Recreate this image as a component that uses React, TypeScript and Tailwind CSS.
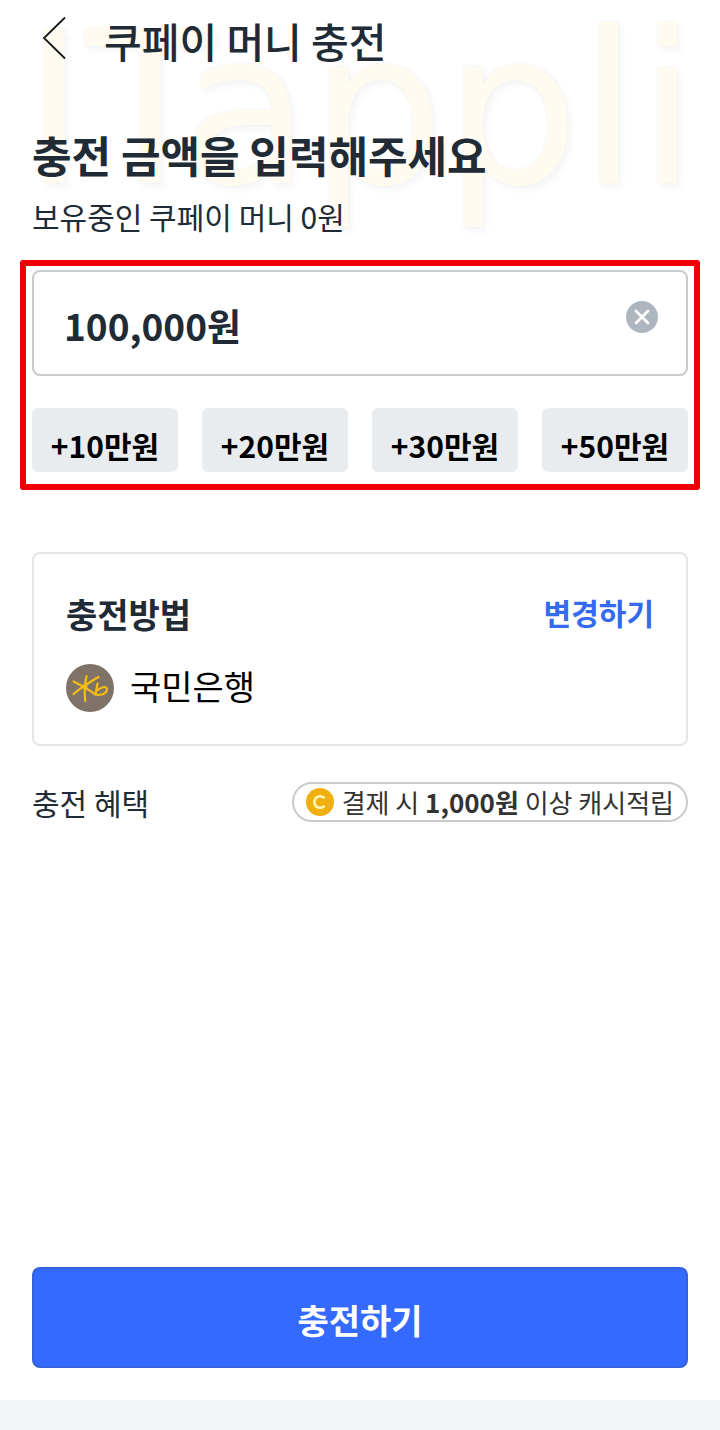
import { useState } from 'react'

interface QuickAmount { label: string; value: number }

const QUICK_AMOUNTS: QuickAmount[] = [
  { label: '+10만원', value: 100000 },
  { label: '+20만원', value: 200000 },
  { label: '+30만원', value: 300000 },
  { label: '+50만원', value: 500000 },
]

function formatWon(n: number): string {
  return n > 0 ? `${n.toLocaleString('en-US')}원` : ''
}

function BackIcon() {
  return (
    <svg width="24" height="44" viewBox="0 0 24 44" fill="none" stroke="#15191d" strokeWidth="1.8" aria-hidden="true">
      <path d="M23 1.5 2 22l21 20.5" />
    </svg>
  )
}

function ClearIcon() {
  return (
    <svg width="32" height="32" viewBox="0 0 32 32" fill="none" aria-hidden="true">
      <circle cx="16" cy="16" r="16" fill="#adb5bf" />
      <path d="M10 10 22 22M22 10 10 22" stroke="#fff" strokeWidth="2.8" strokeLinecap="round" />
    </svg>
  )
}

function KbLogo() {
  return (
    <svg width="48" height="48" viewBox="0 0 48 48" fill="none" aria-hidden="true">
      <circle cx="24" cy="24" r="24" fill="#7f7368" />
      <g stroke="#f5bd13" strokeWidth="2.2" strokeLinecap="round" strokeLinejoin="round">
        <path d="M20.5 12C18.600 20 18.200 28 19.200 37" />
        <path d="M32.500 13C25.500 17 16 23 7.500 30" />
        <path d="M7.500 17.500c7 3.500 14.500 7.500 22 13" />
        <path d="M31.500 19.500c-.6 3.500-1.300 7-2 11 4 1 9.500 0 11.200-3.500 1.200-3-1-4.500-3.800-3.800-2.600.7-4.600 2-6.400 3.700" />
      </g>
      <circle cx="19" cy="22.500" r="2.500" fill="#f5bd13" />
    </svg>
  )
}

function CashIcon() {
  return (
    <svg width="28" height="28" viewBox="0 0 28 28" fill="none" aria-hidden="true">
      <circle cx="14" cy="14" r="14" fill="#f0b010" />
      <path d="M18.500 10.200a5.800 5.800 0 1 0 0 7.600" stroke="#fff7b8" strokeWidth="2.600" />
    </svg>
  )
}

export default function App() {
  const [amount, setAmount] = useState(100000)

  return (
    <div className="relative isolate flex min-h-screen flex-col overflow-hidden bg-white font-['Noto_Sans_CJK_KR',sans-serif] text-[#212b36]">
      {/* Watermark */}
      <div
        aria-hidden="true"
        className="pointer-events-none absolute inset-x-0 top-0 -z-10 text-center font-['DejaVu_Sans',sans-serif] text-[212px] leading-[220px] whitespace-nowrap text-[#fffbf0] select-none [text-shadow:0_0_3px_#f1eeee,4px_5px_6px_#f7f7f9]"
      >
        ITappli
      </div>

      <header className="flex h-20 items-center gap-[38px] pr-8 pl-[42px]">
        <button type="button" aria-label="뒤로" className="-mt-1">
          <BackIcon />
        </button>
        <h1 className="text-[41px] leading-[60px] font-medium">쿠페이 머니 충전</h1>
      </header>

      <main className="flex flex-1 flex-col">
        <div className="px-8 pt-[42px]">
          <h2 className="text-[43px] leading-[64px] font-bold">충전 금액을 입력해주세요</h2>
          <p className="mt-2 text-[30px] leading-[44px]">보유중인 쿠페이 머니 0원</p>
        </div>

        {/* Amount */}
        <section className="mx-5 mt-[22px] rounded-[3px] border-[6px] border-[#ee0006] px-[6px] pt-1 pb-3">
          <div className="flex h-[106px] items-center rounded-lg border-2 border-[#c9cccf] bg-white pr-7 pl-[30px]">
            <input
              type="text"
              inputMode="numeric"
              aria-label="충전 금액"
              value={formatWon(amount)}
              onChange={e => setAmount(Number(e.target.value.replace(/\D/g, '')))}
              className="min-w-0 flex-1 bg-transparent pt-1 text-[37px] leading-[56px] font-bold outline-none"
            />
            <button type="button" aria-label="지우기" onClick={() => setAmount(0)} className="mb-3">
              <ClearIcon />
            </button>
          </div>
          <div className="mt-8 grid grid-cols-4 gap-6">
            {QUICK_AMOUNTS.map(q => (
              <button
                key={q.value}
                type="button"
                onClick={() => setAmount(amount + q.value)}
                className="h-16 rounded-md bg-[#e9ecef] pt-[10px] text-[30px] leading-[44px] font-bold text-black"
              >
                {q.label}
              </button>
            ))}
          </div>
        </section>

        {/* Payment method */}
        <section className="mx-8 mt-[62px] rounded-lg border-2 border-[#e3e5e7] px-8 pt-8 pb-[30px]">
          <div className="flex items-center justify-between">
            <h3 className="text-[34px] leading-[56px] font-bold">충전방법</h3>
            <button type="button" className="pb-1 text-[30px] leading-[44px] font-bold text-[#346aed]">
              변경하기
            </button>
          </div>
          <div className="mt-4 flex items-center gap-4 text-black">
            <span className="pt-1">
              <KbLogo />
            </span>
            <span className="text-[34px] leading-[56px]">국민은행</span>
          </div>
        </section>

        <div className="flex items-center justify-between px-8 pt-[34px]">
          <span className="text-[30px] leading-[44px]">충전 혜택</span>
          <span className="flex h-10 items-center gap-2 rounded-full border-2 border-[#c9cccf] bg-white px-3 text-[26px] leading-[36px] text-[#333333]">
            <CashIcon />
            <span>결제 시 <b>1,000원</b> 이상 캐시적립</span>
          </span>
        </div>

        <div className="mt-auto px-8 pb-8">
          <button
            type="button"
            className="h-[101px] w-full rounded-lg border-2 border-[#3562dc] bg-[#346aff] pt-1 text-[34px] leading-[56px] font-bold text-white"
          >
            충전하기
          </button>
        </div>
      </main>

      <footer className="h-[30px] bg-[#f4f5f8]" />
    </div>
  )
}
